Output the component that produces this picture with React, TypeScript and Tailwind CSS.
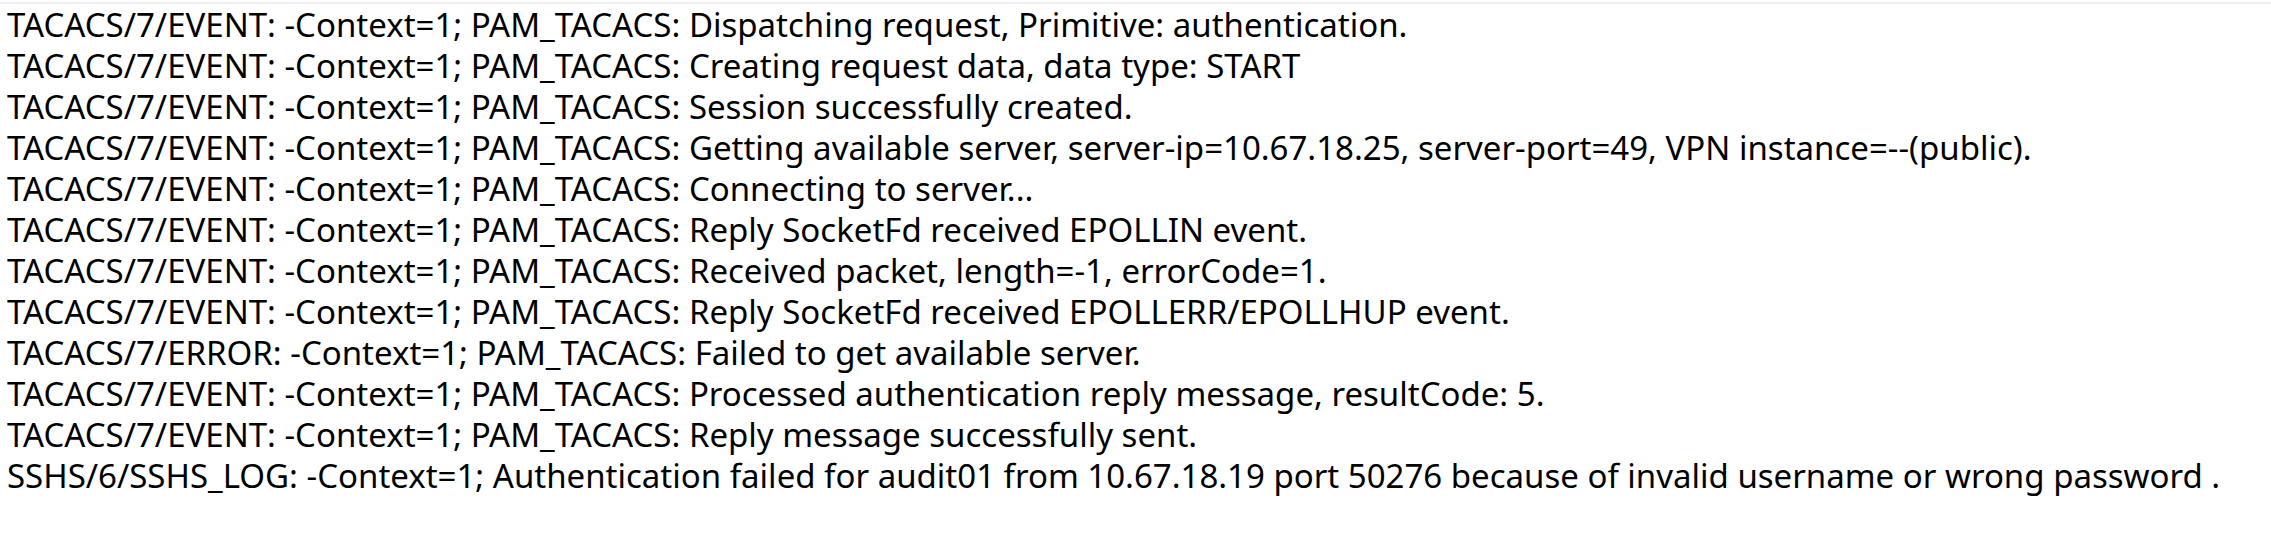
import React from "react";

const lines = [
  "TACACS/7/EVENT: -Context=1; PAM_TACACS: Dispatching request, Primitive: authentication.",
  "TACACS/7/EVENT: -Context=1; PAM_TACACS: Creating request data, data type: START",
  "TACACS/7/EVENT: -Context=1; PAM_TACACS: Session successfully created.",
  "TACACS/7/EVENT: -Context=1; PAM_TACACS: Getting available server, server-ip=10.67.18.25, server-port=49, VPN instance=--(public).",
  "TACACS/7/EVENT: -Context=1; PAM_TACACS: Connecting to server...",
  "TACACS/7/EVENT: -Context=1; PAM_TACACS: Reply SocketFd received EPOLLIN event.",
  "TACACS/7/EVENT: -Context=1; PAM_TACACS: Received packet, length=-1, errorCode=1.",
  "TACACS/7/EVENT: -Context=1; PAM_TACACS: Reply SocketFd received EPOLLERR/EPOLLHUP event.",
  "TACACS/7/ERROR: -Context=1; PAM_TACACS: Failed to get available server.",
  "TACACS/7/EVENT: -Context=1; PAM_TACACS: Processed authentication reply message, resultCode: 5.",
  "TACACS/7/EVENT: -Context=1; PAM_TACACS: Reply message successfully sent.",
  "SSHS/6/SSHS_LOG: -Context=1; Authentication failed for audit01 from 10.67.18.19 port 50276 because of invalid username or wrong password .",
];

export default function App() {
  return (
    <div className="w-[2271px] h-[544px] bg-white overflow-hidden">
      <div className="mt-[2px] h-[2px] bg-[#f0f0f0]" />
      <div className="pl-[7px] font-['Noto_Sans',sans-serif] text-[33px] leading-[41px] text-black whitespace-pre">
        {lines.map((l, i) => (
          <div key={i}>{l}</div>
        ))}
      </div>
    </div>
  );
}
